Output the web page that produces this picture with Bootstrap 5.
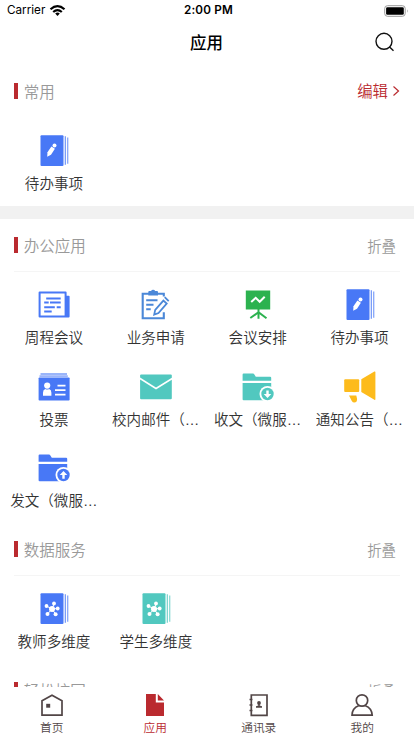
<!DOCTYPE html>
<html lang="zh-CN">
<head>
<meta charset="utf-8">
<meta name="viewport" content="width=device-width, initial-scale=1">
<title>应用</title>
<link href="https://cdn.jsdelivr.net/npm/bootstrap@5.3.0/dist/css/bootstrap.min.css" rel="stylesheet">
<style>
body{font-family:"Liberation Sans","Noto Sans CJK SC",sans-serif;color:#333;font-weight:350}
.app{height:736px}
.statusbar{height:20px;font:400 11.7px/21px Inter,sans-serif;color:#000;padding:1px 4px 0 7px}
.clock{font-weight:600;letter-spacing:.2px}
.side{width:122px}
.titlebar{height:44.5px;padding:0 20px}
.page-title{font-size:16.5px;line-height:24px;font-weight:500;color:#000;padding-top:1px;margin-left:-1px!important}
.end-slot{width:19px}
.section-head{height:53px;padding:0 18px 0 14px;font-size:15.5px;line-height:22px;color:#999}
.head-text{padding-top:3px}
.bar{width:3.5px;height:16.5px;background:#ba2a2f;margin-right:6.2px}
.fold{font-size:14.4px}
.edit{color:#ba2a2f;font-size:15.4px;margin-right:-4px}
.edit .head-text{padding-top:2px}
.rule{margin:-1px 14px 0;height:1px;background:#f5f5f5}
.tiles{padding:0 3.5px 6.5px 3px}
.tile{height:81.5px;padding-top:16.5px}
.tile svg{width:34px;height:34px;flex:none}
.tile-label{font-size:14.55px;line-height:20px;margin-top:6.4px;max-width:87.5px}
.band{height:13px;background:#f1f1f1}
.tabs{height:49.5px;font-size:11.7px;line-height:16px;color:#514546}
.tabs .tab{padding-top:6px}
.tabs svg{width:24px;height:24px;margin-bottom:3px}
.tabs .on{color:#ba2a2f}
svg{display:block}
.blue{color:#4878f6}.teal{color:#51c8bf}
</style>
<script src="https://cdn.jsdelivr.net/npm/bootstrap@5.3.0/dist/js/bootstrap.bundle.min.js"></script>
</head>
<body class="bg-white overflow-hidden">
<svg width="0" height="0" class="d-none" aria-hidden="true">
  <symbol id="book" viewBox="0 0 34 34"><rect x="3.500" y="1.200" width="23" height="30.8" rx="1" fill="currentColor"/><path d="M28.300 2.300v28.5" stroke="currentColor" stroke-width="1.100" opacity=".85"/><path d="M30.700 3.500v26.200" stroke="currentColor" stroke-width="1.300" opacity=".65"/></symbol>
  <symbol id="pen" viewBox="0 0 34 34"><path d="m10.200 22.800.3-4.500 3.900-5.900 3.500 2.400-3.900 5.900z" fill="#fff"/><circle cx="17.500" cy="11.400" r="2" fill="#fff"/></symbol>
  <symbol id="nodes" viewBox="0 0 34 34"><g stroke="#fff" stroke-width="1"><path d="m15 17 2-5M15 17l-5.500-3M15 17l5.500-.5M15 17l-4.500 5M15 17l3.500 5"/></g><g fill="#fff"><circle cx="15" cy="17" r="3"/><circle cx="17" cy="11.500" r="1.900"/><circle cx="9.500" cy="14" r="1.900"/><circle cx="20.700" cy="16.500" r="1.900"/><circle cx="10.500" cy="22" r="2"/><circle cx="18.600" cy="22.200" r="2"/></g></symbol>
  <symbol id="folder" viewBox="0 0 34 34"><path fill="currentColor" d="M1.600 4.600q0-1 1-1h9.500q.7 0 1.100.7l1.600 2.400h14.300q1.100 0 1.100 1.100v3H1.600zM1.600 13h28.600v17.300H2.600q-1 0-1-1z"/><circle cx="26.500" cy="24" r="8" fill="#fff"/><circle cx="26.500" cy="24" r="6.200" fill="currentColor"/></symbol>
</svg>
<div class="app d-flex flex-column overflow-hidden">
  <div class="statusbar d-flex justify-content-between align-items-center flex-shrink-0">
    <div class="side d-flex align-items-center"><span>Carrier</span>
      <svg class="ms-1" width="17" height="13" viewBox="0 0 17 13"><g fill="none" stroke="#000" stroke-width="2.200"><path d="M1.500 5.200q7-6.300 14 0M4.200 8q4.300-3.900 8.600 0"/></g><path d="m8.500 12 2.300-2.500q-2.300-1.900-4.600 0z"/></svg>
    </div>
    <span class="clock">2:00 PM</span>
    <div class="side d-flex justify-content-end">
      <svg width="27" height="12" viewBox="0 0 27 12"><rect x="1.700" y=".7" width="20.500" height="10.600" rx="2.800" fill="none" stroke="#999"/><rect x="3.100" y="2.200" width="17.700" height="7.600" rx="1.300"/><path d="M24 4.300q1.500 1.700 0 3.400z" fill="#999"/></svg>
    </div>
  </div>
  <header class="titlebar d-flex justify-content-between align-items-center flex-shrink-0">
    <span class="end-slot"></span>
    <h1 class="page-title m-0">应用</h1>
    <svg class="end-slot" height="20" viewBox="0 0 19 20" fill="none" stroke="#111" stroke-width="1.400"><circle cx="9" cy="9.300" r="8"/><path d="m14.300 14.800 4.200 4"/></svg>
  </header>
  <main class="flex-grow-1 overflow-hidden">
    <section>
      <div class="section-head d-flex align-items-center"><span class="bar"></span><span class="head-text">常用</span><span class="edit ms-auto d-flex align-items-center"><span class="head-text">编辑</span><svg class="ms-1" width="8" height="12" viewBox="0 0 8 12" fill="none" stroke="currentColor" stroke-width="1.200"><path d="m1.500 1.500 5 4.500-5 4.500"/></svg></span></div>
      <div class="tiles row row-cols-4 g-0">
        <div class="tile d-flex flex-column align-items-center"><svg class="blue"><use href="#book"/><use href="#pen"/></svg><div class="tile-label text-truncate">待办事项</div></div>
      </div>
    </section>
    <div class="band"></div>
    <section>
      <div class="section-head d-flex align-items-center"><span class="bar"></span><span class="head-text">办公应用</span><span class="head-text fold ms-auto">折叠</span></div>
      <div class="rule"></div>
      <div class="tiles row row-cols-4 g-0">
        <div class="tile d-flex flex-column align-items-center"><svg class="blue" viewBox="0 0 34 34"><path fill="currentColor" fill-rule="evenodd" d="M2.600 3.500h26q1 0 1 1v3.200h2.200q.8 0 .8.8v20q0 1-1 1h-29q-1 0-1-1v-24q0-1 1-1zM3.600 5.500v22h24v-22z"/><path d="M9.200 10.500h14.500M7.200 14.600h4.500M13 14.600h10.700M7.200 19.200h10.600M19.700 19.200h4M7.200 23.600h7.500" stroke="currentColor" stroke-width="2"/></svg><div class="tile-label text-truncate">周程会议</div></div>
        <div class="tile d-flex flex-column align-items-center"><svg viewBox="0 0 34 34" fill="none" stroke="#4b88d8" stroke-width="2.100"><path d="M24.800 8.500V5.700H3.700v24.600h21.100v-6"/><path fill="#4b88d8" stroke="none" d="M9.300 4q0-1 1-1h1.800q.5-1.300 2-1.300t2 1.300H18q1 0 1 1v3.600H9.300z"/><path d="M7.200 12.300h11.300M7.200 16.800h7.300M7.200 21.200h4.500"/><path stroke-width="1.800" d="m15.200 26.600 1-4.800 8.200-9.200 3.300 2.900-8.200 9.500zM25.700 9.200l4 3.900"/></svg><div class="tile-label text-truncate">业务申请</div></div>
        <div class="tile d-flex flex-column align-items-center"><svg viewBox="0 0 34 34" fill="none"><path fill="#2cb24f" d="M4.800 2.500h24.400v19H4.800z"/><path stroke="#fff" stroke-width="2" d="m10.200 14 4.500-4.200 4 4 5-5"/><path stroke="#2cb24f" stroke-width="2" d="M17.500 21v9.800M9.300 30l8.200-5.700 8 6"/></svg><div class="tile-label text-truncate">会议安排</div></div>
        <div class="tile d-flex flex-column align-items-center"><svg class="blue"><use href="#book"/><use href="#pen"/></svg><div class="tile-label text-truncate">待办事项</div></div>
        <div class="tile d-flex flex-column align-items-center"><svg class="blue" viewBox="0 0 34 34"><path stroke="currentColor" stroke-width="1.100" d="M3.500 4h26.500"/><path fill="currentColor" opacity=".55" d="M2.500 5.200h28.300v1.900H2.500z"/><rect x="1.600" y="7.500" width="31" height="23" rx=".8" fill="currentColor"/><g fill="#fff"><circle cx="10.200" cy="15.600" r="3.100"/><path d="M6 25.800v-3q0-3 2.300-3.700 1.900 1 3.800 0 2.300.7 2.300 3.700v3z"/></g><path d="M20.500 15.700h8M18 20.200h10.500M18 24.700h10.500" stroke="#fff" stroke-width="1.700"/></svg><div class="tile-label text-truncate">投票</div></div>
        <div class="tile d-flex flex-column align-items-center"><svg class="teal" viewBox="0 0 34 34" fill="currentColor"><path d="M1.100 7.500V5.400q0-1 1-1h29.700q1 0 1 1v2.300L17 17.500z"/><path d="m1.100 9.600 15.900 10 15.800-9.900v18.600q0 1-1 1H2.100q-1 0-1-1z"/></svg><div class="tile-label text-truncate">校内邮件（微服务）</div></div>
        <div class="tile d-flex flex-column align-items-center"><svg class="teal" viewBox="0 0 34 34"><use href="#folder"/><path fill="#fff" d="M25.300 20.500h2.400v3.500h2.600l-3.800 3.900-3.800-3.900h2.600z"/></svg><div class="tile-label text-truncate">收文（微服务）</div></div>
        <div class="tile d-flex flex-column align-items-center"><svg viewBox="0 0 34 34" fill="#fdbb1c"><rect x="1.200" y="9.300" width="15" height="12.600" rx="1"/><path d="M18.300 9.200 31.400 1.500q1-.4 1 .6v27.200q0 1-1 .5L18.300 22zM6 25.500h7.300l.8 3.600q0 3.500-2.800 3.500-1.600 0-2.500-1.600z"/></svg><div class="tile-label text-truncate">通知公告（微服务）</div></div>
        <div class="tile d-flex flex-column align-items-center"><svg class="blue" viewBox="0 0 34 34"><use href="#folder"/><path fill="#fff" d="M25.300 27.700h2.400v-3.600h2.600l-3.800-4-3.800 4h2.600z"/></svg><div class="tile-label text-truncate">发文（微服务）</div></div>
      </div>
    </section>
    <section>
      <div class="section-head d-flex align-items-center"><span class="bar"></span><span class="head-text">数据服务</span><span class="head-text fold ms-auto">折叠</span></div>
      <div class="rule"></div>
      <div class="tiles row row-cols-4 g-0">
        <div class="tile d-flex flex-column align-items-center"><svg class="blue"><use href="#book"/><use href="#nodes"/></svg><div class="tile-label text-truncate">教师多维度</div></div>
        <div class="tile d-flex flex-column align-items-center"><svg class="teal"><use href="#book"/><use href="#nodes"/></svg><div class="tile-label text-truncate">学生多维度</div></div>
      </div>
    </section>
    <section>
      <div class="section-head d-flex align-items-center"><span class="bar"></span><span class="head-text">轻松校园</span><span class="head-text fold ms-auto">折叠</span></div>
    </section>
  </main>
  <nav class="tabs row g-0 flex-shrink-0 bg-white">
    <div class="tab col d-flex flex-column align-items-center"><svg viewBox="0 0 24 24" fill="none" stroke="currentColor" stroke-width="1.700"><path d="M2 22.200V7.800l10-5.600 10 5.600v14.400z"/><path fill="currentColor" stroke="none" d="M6.200 10.800h4v3.900h-4z"/></svg><span>首页</span></div>
    <div class="tab col on d-flex flex-column align-items-center"><svg viewBox="0 0 24 24" fill="currentColor"><path d="M3 1h9.800v8.500H21V23H3zM14.800 1l6.200 6.500h-6.200z"/></svg><span>应用</span></div>
    <div class="tab col d-flex flex-column align-items-center"><svg viewBox="0 0 24 24" fill="none" stroke="currentColor" stroke-width="1.700"><path d="M4.300 2H20v20.300H4.300zM2.500 6.500h3M2.500 12h3M2.500 17.500h3"/><g fill="currentColor" stroke="none"><circle cx="12" cy="10" r="1.900"/><path d="M11.300 11h1.400v1.500l2.300.8v1.500H9v-1.500l2.300-.8z"/></g></svg><span>通讯录</span></div>
    <div class="tab col d-flex flex-column align-items-center"><svg viewBox="0 0 24 24" fill="none" stroke="currentColor" stroke-width="1.700"><circle cx="12" cy="7.500" r="5.700"/><path d="M8.700 12.700Q2.200 15 2 22.200h20.200q-.4-7.200-6.900-9.500"/></svg><span>我的</span></div>
  </nav>
</div>
</body>
</html>
